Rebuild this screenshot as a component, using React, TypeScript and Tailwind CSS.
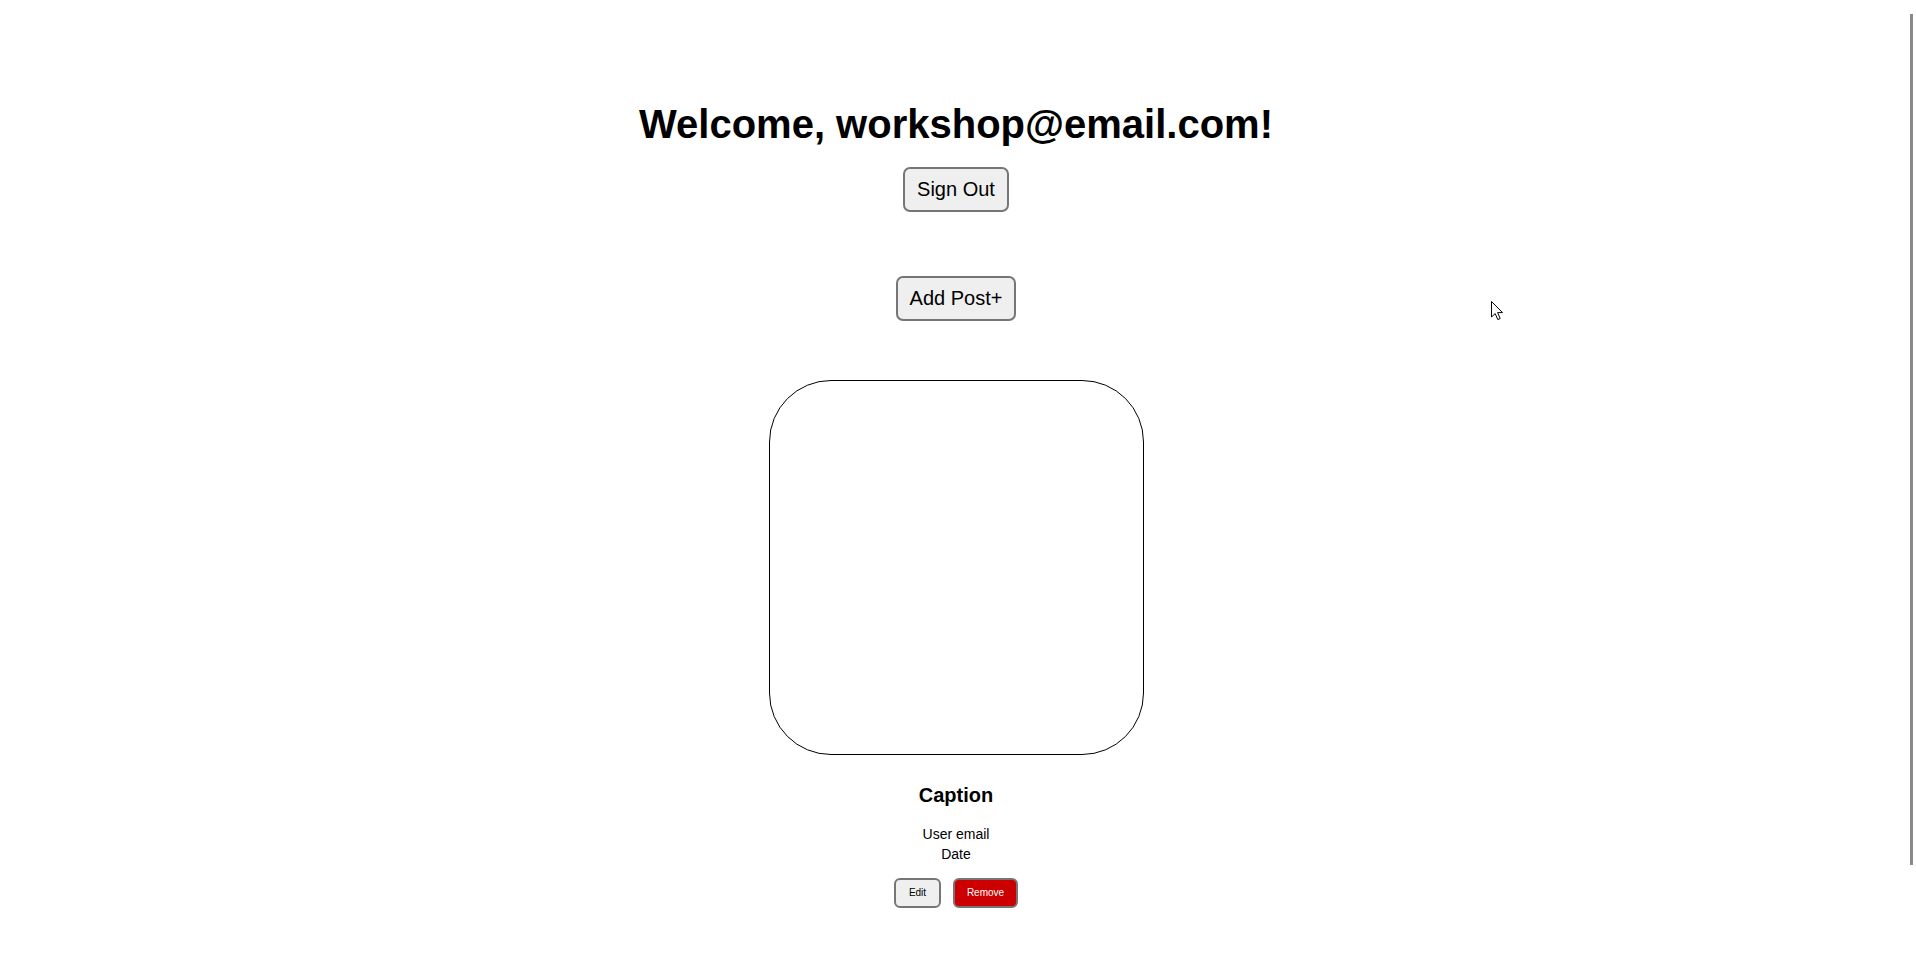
export default function App() {
  return (
    <main className="relative flex min-h-screen flex-col items-center bg-white pr-[4px] pt-[101px] font-['Liberation_Sans',Arial,sans-serif] text-black">
      <h1 className="text-[40px] font-bold leading-[46px]">Welcome, workshop@email.com!</h1>

      <button
        type="button"
        className="mt-[20px] h-[45px] rounded-[7px] border-2 border-[#767676] bg-[#efefef] px-[12px] text-[20px] leading-[23px]"
      >
        Sign Out
      </button>

      <button
        type="button"
        className="mt-[64px] h-[45px] rounded-[7px] border-2 border-[#767676] bg-[#efefef] px-[12px] text-[20px] leading-[23px]"
      >
        Add Post+
      </button>

      {/* Post */}
      <div className="mt-[59px] h-[375px] w-[375px] rounded-[62px] border border-black" />

      <h3 className="mt-[29px] text-[20px] font-bold leading-[23px]">Caption</h3>
      <div className="mt-[17px] flex flex-col items-center text-[14px] leading-[20px]">
        <p>User email</p>
        <p>Date</p>
      </div>

      <div className="mt-[14px] flex gap-[12px]">
        <button
          type="button"
          className="h-[30px] w-[47px] rounded-[6px] border-2 border-[#767676] bg-[#efefef] text-[10px] leading-[12px]"
        >
          Edit
        </button>
        <button
          type="button"
          className="h-[30px] w-[65px] rounded-[6px] border-2 border-[#767676] bg-[#cc0000] text-[10px] leading-[12px] text-white"
        >
          Remove
        </button>
      </div>

      {/* mouse pointer */}
      <svg className="absolute left-[1491px] top-[301px]" width="13" height="20" viewBox="0 0 13 20">
        <path d="M0.5 0.5 L0.5 16 L4.2 12.6 L6.8 18.6 L9.2 17.5 L6.6 11.6 L11.5 11.6 Z" fill="white" stroke="black" strokeWidth="1" />
      </svg>

      {/* overlay scrollbar */}
      <div className="fixed right-[3px] top-[14px] h-[851px] w-[3px] bg-[#8a8a8a]" />
    </main>
  );
}
